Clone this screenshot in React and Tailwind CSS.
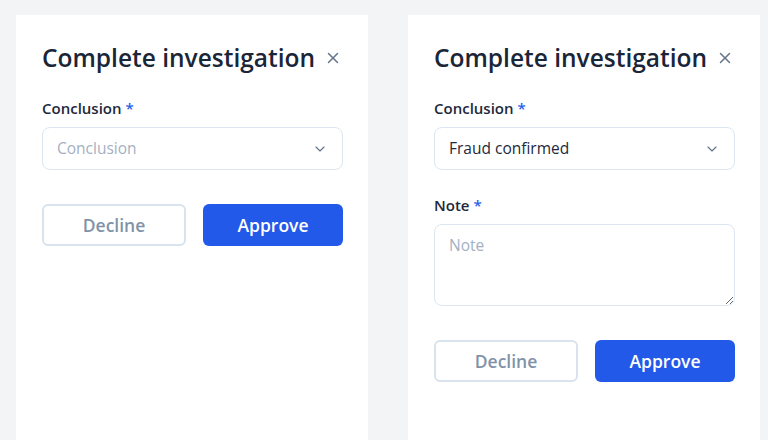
import { X, ChevronDown } from 'lucide-react';

const font = { fontFamily: '"Open Sans", "Noto Sans", sans-serif' };

function Label({ children }) {
  return (
    <div className="text-[15px] font-semibold text-[#1e293b] leading-5 mb-[9px]">
      {children} <span className="text-[#2563eb]">*</span>
    </div>
  );
}

function Select({ value, placeholder }) {
  return (
    <div className="flex h-[43px] items-center justify-between rounded-lg border border-[#dce6f0] px-[14px]">
      {value ? (
        <span className="text-[15.5px] text-[#1e293b]">{value}</span>
      ) : (
        <span className="text-[15.5px] text-[#a3b1c2]">{placeholder}</span>
      )}
      <ChevronDown className="h-4 w-4 text-[#64748b]" strokeWidth={1.75} />
    </div>
  );
}

function Buttons() {
  return (
    <div className="flex gap-[17px]">
      <button className="h-[42px] flex-1 rounded-md border-2 border-[#d8e3ee] text-[17.5px] font-semibold text-[#8193a8]">
        Decline
      </button>
      <button className="h-[42px] flex-1 rounded-md bg-[#2259e9] text-[17.5px] font-semibold text-white">
        Approve
      </button>
    </div>
  );
}

function Panel({ children }) {
  return (
    <div className="w-[352px] h-[440px] bg-white pl-[26px] pr-[25px] pt-[29px]">
      <div className="flex items-center justify-between h-[28px]">
        <h2 className="text-[24.5px] font-semibold text-[#1a2638]">Complete investigation</h2>
        <X className="h-[18px] w-[18px] text-[#64748b] mr-[1px]" strokeWidth={2} />
      </div>
      {children}
    </div>
  );
}

export default function App() {
  return (
    <div className="h-[440px] w-[768px] overflow-hidden bg-[#f3f4f6] pl-4 pt-[15px] flex gap-10" style={font}>
      <Panel>
        <div className="mt-[26px]">
          <Label>Conclusion</Label>
          <Select placeholder="Conclusion" />
        </div>
        <div className="mt-[34px]">
          <Buttons />
        </div>
      </Panel>
      <Panel>
        <div className="mt-[26px]">
          <Label>Conclusion</Label>
          <Select value="Fraud confirmed" />
        </div>
        <div className="mt-[25px]">
          <Label>Note</Label>
          <textarea
            placeholder="Note"
            className="block h-[82px] w-full resize-y rounded-lg border border-[#dce6f0] px-[14px] py-[9px] text-[15.5px] text-[#1e293b] outline-none placeholder:text-[#a3b1c2]"
          />
        </div>
        <div className="mt-[34px]">
          <Buttons />
        </div>
      </Panel>
    </div>
  );
}
